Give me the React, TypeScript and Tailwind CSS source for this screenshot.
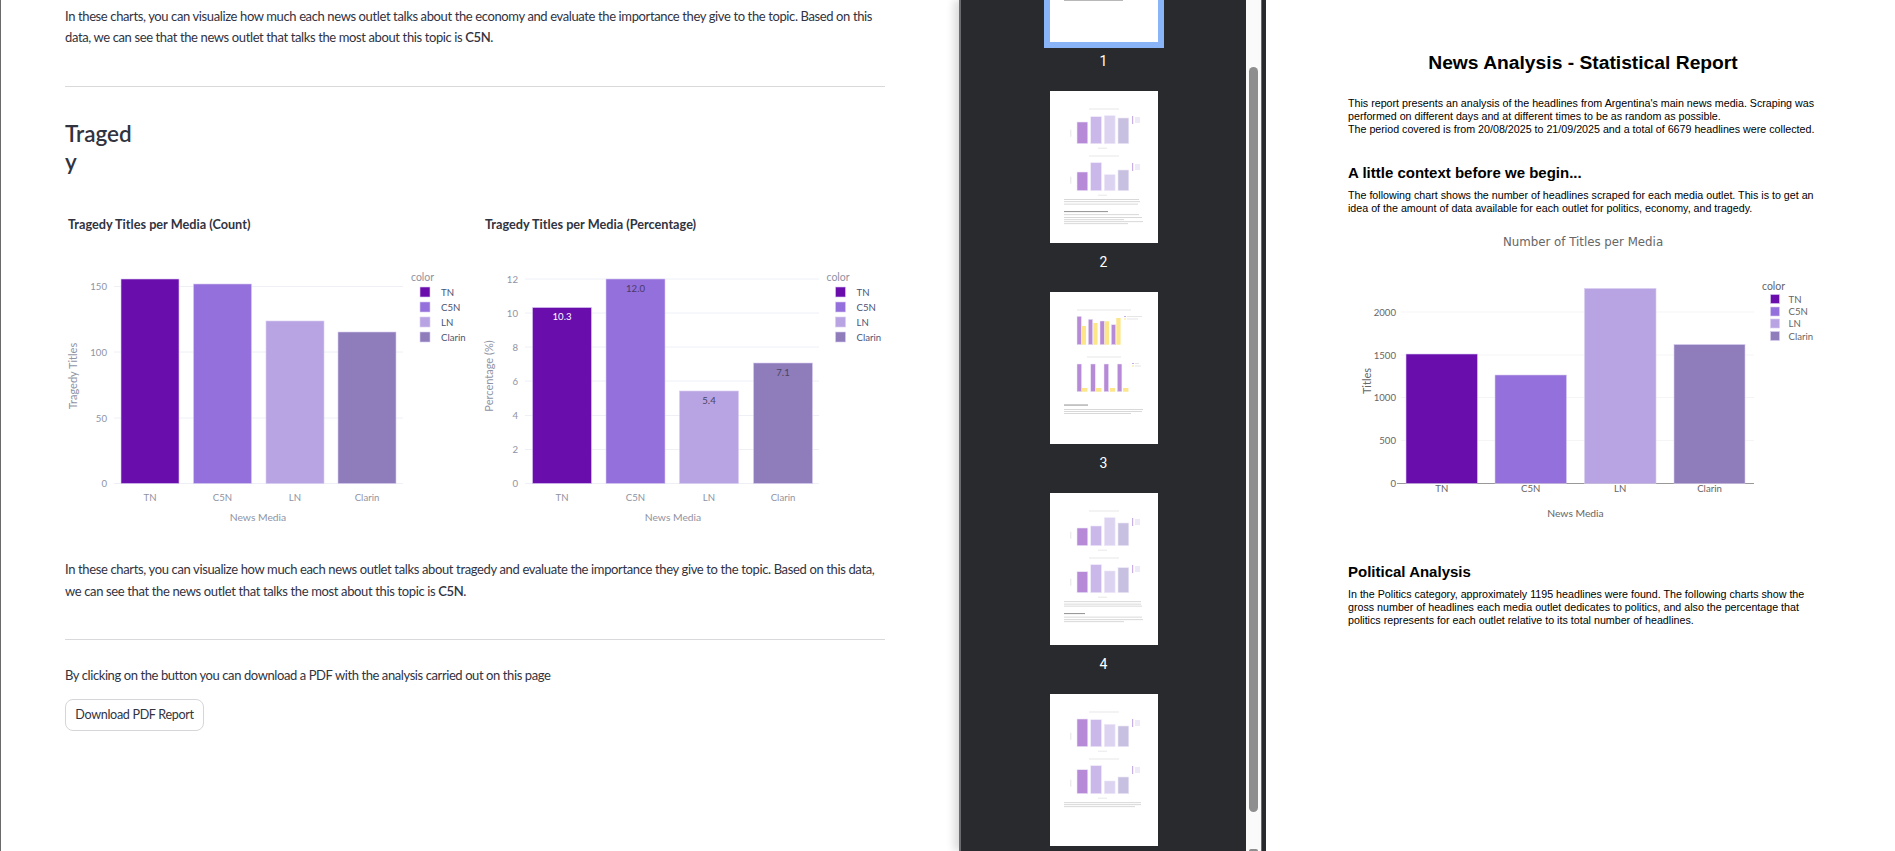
import React from "react";

const COLORS = ["#6a0dad", "#9370db", "#b8a4e3", "#8e7cbb"];
const NAMES = ["TN", "C5N", "LN", "Clarin"];
const THUMB_COLORS = ["#b68ad6", "#cbb8ea", "#dcd3f0", "#c7c0e0"];

interface ChartSpec {
  width: number;
  height: number;
  baseline: number;
  gridFrom: number;
  gridTo: number;
  tickRight: number;
  ticks: { y: number; label: string }[];
  bars: { x: number; w: number; top: number; label?: string; labelColor?: string }[];
  labelY: number;
  xTitle: { x: number; y: number };
  yTitle: { x: number; y: number; text: string };
  legend: { titleX: number; titleY: number; swatchX: number; labelX: number; ys: number[]; size: number };
  textColor: string;
  font: string;
  gridColor: string;
  title?: { x: number; y: number; text: string };
  axisLine?: boolean;
}

const BarChart: React.FC<{ spec: ChartSpec }> = ({ spec }) => {
  const s = spec;
  return (
    <svg width={s.width} height={s.height} className="block shrink-0" fontFamily={s.font} fill={s.textColor}>
      {s.title && (
        <text x={s.title.x} y={s.title.y} textAnchor="middle" fontSize="11.8" fontFamily="DejaVu Sans, sans-serif" fill="#666">
          {s.title.text}
        </text>
      )}
      {s.ticks.map((t) => (
        <g key={t.label}>
          <line x1={s.gridFrom} x2={s.gridTo} y1={t.y} y2={t.y} stroke={s.gridColor} strokeWidth="1" />
          <text x={s.tickRight} y={t.y + 3.5} textAnchor="end" fontSize="9.6">
            {t.label}
          </text>
        </g>
      ))}
      {s.axisLine && <line x1={s.gridFrom - 4} x2={s.gridTo} y1={s.baseline} y2={s.baseline} stroke="#999" strokeWidth="1" />}
      {s.bars.map((b, i) => (
        <g key={NAMES[i]}>
          <rect x={b.x} y={b.top} width={b.w} height={s.baseline - b.top} fill={COLORS[i]} stroke="#d9cdf2" strokeWidth="0.6" />
          {b.label && (
            <text x={b.x + b.w / 2} y={b.top + 12.5} textAnchor="middle" fontSize="9.6" fill={b.labelColor}>
              {b.label}
            </text>
          )}
          <text x={b.x + b.w / 2} y={s.labelY} textAnchor="middle" fontSize="9.6">
            {NAMES[i]}
          </text>
          <rect x={s.legend.swatchX} y={s.legend.ys[i] - s.legend.size / 2} width={s.legend.size} height={s.legend.size} fill={COLORS[i]} stroke="#d9cdf2" strokeWidth="0.6" />
          <text x={s.legend.labelX} y={s.legend.ys[i] + 3.5} fontSize="9.6" fill={s.axisLine ? s.textColor : "#4a5578"}>
            {NAMES[i]}
          </text>
        </g>
      ))}
      <text x={s.legend.titleX} y={s.legend.titleY + 3.5} fontSize="10.5">
        color
      </text>
      <text x={s.xTitle.x} y={s.xTitle.y + 3.5} textAnchor="middle" fontSize="10.3">
        News Media
      </text>
      <text transform={`translate(${s.yTitle.x + 3.5} ${s.yTitle.y}) rotate(-90)`} textAnchor="middle" fontSize="11">
        {s.yTitle.text}
      </text>
    </svg>
  );
};

const CHART_FONT = "Lato, sans-serif";

const countChart: ChartSpec = {
  width: 410,
  height: 275,
  baseline: 228.5,
  gridFrom: 49,
  gridTo: 338,
  tickRight: 42,
  ticks: [
    { y: 228.5, label: "0" },
    { y: 163, label: "50" },
    { y: 97, label: "100" },
    { y: 31.5, label: "150" },
  ],
  bars: [
    { x: 56, w: 58, top: 24 },
    { x: 128.5, w: 58, top: 29 },
    { x: 201, w: 58, top: 66 },
    { x: 273, w: 58, top: 77 },
  ],
  labelY: 246,
  xTitle: { x: 193, y: 262 },
  yTitle: { x: 8, y: 121, text: "Tragedy Titles" },
  legend: { titleX: 346, titleY: 22, swatchX: 355, labelX: 376, ys: [37, 52, 67, 82], size: 10 },
  textColor: "#8f93a3",
  font: CHART_FONT,
  gridColor: "#eef0f6",
};

const percentChart: ChartSpec = {
  ...countChart,
  gridFrom: 44,
  gridTo: 338,
  tickRight: 37,
  ticks: [
    { y: 228.5, label: "0" },
    { y: 194.5, label: "2" },
    { y: 160.5, label: "4" },
    { y: 126, label: "6" },
    { y: 92, label: "8" },
    { y: 58, label: "10" },
    { y: 24, label: "12" },
  ],
  bars: [
    { x: 51.5, w: 59, top: 52.5, label: "10.3", labelColor: "#ffffff" },
    { x: 125, w: 59, top: 24, label: "12.0", labelColor: "#4a3a6a" },
    { x: 198.5, w: 59, top: 136, label: "5.4", labelColor: "#4a4560" },
    { x: 272.5, w: 59, top: 108, label: "7.1", labelColor: "#4a4560" },
  ],
  xTitle: { x: 192, y: 262 },
  yTitle: { x: 8, y: 121, text: "Percentage (%)" },
  legend: { titleX: 345.5, titleY: 22, swatchX: 354.5, labelX: 375.5, ys: [37, 52, 67, 82], size: 10 },
};

const reportChart: ChartSpec = {
  width: 480,
  height: 295,
  baseline: 251.5,
  gridFrom: 61,
  gridTo: 414,
  tickRight: 56,
  ticks: [
    { y: 251.5, label: "0" },
    { y: 208.5, label: "500" },
    { y: 165.5, label: "1000" },
    { y: 123, label: "1500" },
    { y: 80, label: "2000" },
  ],
  bars: [
    { x: 66, w: 71.5, top: 122 },
    { x: 155, w: 71.5, top: 143 },
    { x: 244.5, w: 71.5, top: 56.5 },
    { x: 334, w: 71, top: 112.5 },
  ],
  labelY: 260,
  xTitle: { x: 235.5, y: 281.5 },
  yTitle: { x: 27.7, y: 149, text: "Titles" },
  legend: { titleX: 422, titleY: 54.5, swatchX: 430.5, labelX: 448.5, ys: [67, 79.5, 91.5, 104], size: 9 },
  textColor: "#666666",
  font: CHART_FONT,
  gridColor: "#f5f5f6",
  title: { x: 243, y: 14, text: "Number of Titles per Media" },
  axisLine: true,
};

interface ThumbBlock {
  titleY: number;
  baseline: number;
  tops: number[];
}

interface ThumbPage {
  page: number;
  blocks: ThumbBlock[];
  lines: { y: number; w: number; dark?: boolean }[];
}

const pages: ThumbPage[] = [
  { page: 1, blocks: [], lines: [{ y: 109.6, w: 59, dark: true }] },
  {
    page: 2,
    blocks: [
      { titleY: 18, baseline: 52.7, tops: [31, 25.7, 24.7, 27] },
      { titleY: 65, baseline: 99.7, tops: [81, 71.7, 83.7, 79] },
    ],
    lines: [
      { y: 108, w: 75 },
      { y: 110.3, w: 76 },
      { y: 112.7, w: 74 },
      { y: 120, w: 44, dark: true },
      { y: 123.3, w: 75 },
      { y: 126, w: 78 },
      { y: 128.3, w: 60 },
      { y: 130.3, w: 79 },
      { y: 132.3, w: 64 },
    ],
  },
  { page: 3, blocks: [], lines: [] },
  {
    page: 4,
    blocks: [
      { titleY: 18, baseline: 52.7, tops: [35, 33, 24.7, 30] },
      { titleY: 65, baseline: 99.7, tops: [78.7, 71.7, 78, 74.7] },
    ],
    lines: [
      { y: 108.3, w: 77 },
      { y: 110.7, w: 77 },
      { y: 112.7, w: 78 },
      { y: 120, w: 21, dark: true },
      { y: 123.7, w: 78 },
      { y: 126.3, w: 79 },
      { y: 128.3, w: 60 },
    ],
  },
  {
    page: 5,
    blocks: [
      { titleY: 18, baseline: 52.7, tops: [25, 25.7, 30.3, 32] },
      { titleY: 65, baseline: 99.7, tops: [75.7, 71.7, 87, 83] },
    ],
    lines: [
      { y: 108.3, w: 77 },
      { y: 110.3, w: 77 },
      { y: 112.3, w: 71 },
    ],
  },
];

const THUMB_X = [27, 40.7, 54.3, 68];

const ThumbLegend = ({ y }: { y: number }) => (
  <g>
    <rect x="82" y={y} width="1.2" height="8" fill="#c7aee6" />
    <rect x="85" y={y + 1} width="5" height="6" fill="#efeaf7" />
  </g>
);

const ThumbLines = ({ lines }: { lines: ThumbPage["lines"] }) => (
  <>
    {lines.map((l) => (
      <rect key={l.y} x="14" y={l.y} width={l.w} height={l.dark ? 1.1 : 0.8} fill={l.dark ? "#9a9a9a" : "#cfcfcf"} />
    ))}
  </>
);

const Thumb: React.FC<{ data: ThumbPage }> = ({ data }) => (
  <svg viewBox="0 0 108 152" width="108" height="152" className="block bg-white blur-[0.3px]">
    {data.blocks.map((b) => (
      <g key={b.titleY}>
        <rect x="39" y={b.titleY - 0.5} width="30" height="1" fill="#e8e8e8" />
        <ThumbLegend y={b.titleY + 7} />
        <rect x="20" y={b.baseline - 14} width="1.4" height="7" fill="#ececec" />
        {b.tops.map((top, i) => (
          <rect key={i} x={THUMB_X[i]} y={top} width="10.8" height={b.baseline - top} fill={THUMB_COLORS[i]} stroke="#eee8f8" strokeWidth="0.6" />
        ))}
        <rect x="48" y={b.baseline + 4} width="9" height="1" fill="#e8e8e8" />
      </g>
    ))}
    <ThumbLines lines={data.lines} />
    {data.page === 3 && (
      <g>
        <rect x="27" y="17.5" width="54" height="1" fill="#e8e8e8" />
        {[
          [27, 24.3, 31.7, 34],
          [38.3, 27.3, 43.3, 31],
          [50, 29, 54.7, 29.3],
          [61.3, 32.7, 66.3, 26],
        ].map(([px, pt, yx, yt]) => (
          <g key={px}>
            <rect x={px} y={pt} width="4.4" height={52.7 - pt} fill="#b68ad6" stroke="#eee8f8" strokeWidth="0.5" />
            <rect x={yx} y={yt} width="4.3" height={52.7 - yt} fill="#fde68a" />
          </g>
        ))}
        <rect x="74" y="24" width="2" height="1" fill="#c7aee6" />
        <rect x="77" y="24" width="15" height="1" fill="#e6e6e6" />
        <rect x="74" y="26.5" width="2" height="1" fill="#fde68a" />
        <rect x="77" y="26.5" width="11" height="1" fill="#e6e6e6" />
        <rect x="37" y="64.5" width="34" height="1" fill="#e8e8e8" />
        {[
          [27, 32],
          [40.7, 46],
          [54, 59.7],
          [67.3, 73],
        ].map(([px, yx]) => (
          <g key={px}>
            <rect x={px} y="72" width="4.6" height="27.7" fill="#b68ad6" stroke="#eee8f8" strokeWidth="0.5" />
            <rect x={yx} y="96" width="5.4" height="3.7" fill="#fde68a" />
          </g>
        ))}
        <rect x="82" y="71" width="2" height="1" fill="#c7aee6" />
        <rect x="85" y="71" width="4" height="1" fill="#e6e6e6" />
        <rect x="82" y="73.5" width="2" height="1" fill="#fde68a" />
        <rect x="85" y="73.5" width="6" height="1" fill="#e6e6e6" />
        <rect x="14" y="112.5" width="24" height="1.1" fill="#9a9a9a" />
        <rect x="14" y="117" width="79" height="0.8" fill="#cfcfcf" />
        <rect x="14" y="119" width="78" height="0.8" fill="#cfcfcf" />
        <rect x="14" y="121" width="67" height="0.8" fill="#cfcfcf" />
      </g>
    )}
  </svg>
);

const App: React.FC = () => {
  return (
    <div className="flex h-[851px] w-full overflow-hidden bg-white">
      {/* streamlit page */}
      <div className="w-[959px] shrink-0 border-l border-[#6a6a6a] pl-[64px] font-['Lato',sans-serif] text-[#31333f]">
        <div className="w-[820px]">
          <p className="whitespace-nowrap pt-[6px] text-[13px] leading-[21px] tracking-[-0.38px]">
            In these charts, you can visualize how much each news outlet talks about the economy and evaluate the importance they give to the topic. Based on this
            <br />
            data, we can see that the news outlet that talks the most about this topic is <b className="font-semibold">C5N</b>.
          </p>
          <hr className="mt-[38px] border-t border-[#d9d9dc]" />
          <h2 className="mt-[33px] w-[70px] break-words text-[22.5px] font-semibold leading-[28px]">Tragedy</h2>
          <div className="mt-[38px] flex gap-[6px]">
            <div className="w-[410px] shrink-0">
              <div className="pl-[3px] text-[12.7px] font-bold leading-5">Tragedy Titles per Media (Count)</div>
              <div className="mt-[21px]">
                <BarChart spec={countChart} />
              </div>
            </div>
            <div className="w-[410px] shrink-0">
              <div className="pl-[4px] text-[12.7px] font-bold leading-5">Tragedy Titles per Media (Percentage)</div>
              <div className="mt-[21px]">
                <BarChart spec={percentChart} />
              </div>
            </div>
          </div>
          <p className="mt-[29px] whitespace-nowrap text-[13px] leading-[21.5px] tracking-[-0.36px]">
            In these charts, you can visualize how much each news outlet talks about tragedy and evaluate the importance they give to the topic. Based on this data,
            <br />
            we can see that the news outlet that talks the most about this topic is <b className="font-semibold">C5N</b>.
          </p>
          <hr className="mt-[37px] border-t border-[#d9d9dc]" />
          <p className="mt-[25px] text-[13px] leading-[21px] tracking-[-0.41px]">By clicking on the button you can download a PDF with the analysis carried out on this page</p>
          <button className="mt-[13px] block h-[32px] w-[139px] rounded-lg border border-[#d5d6da] bg-white text-[12.6px] tracking-[-0.34px] text-[#31333f]">Download PDF Report</button>
        </div>
      </div>

      {/* pdf viewer: thumbnails */}
      <div className="relative flex w-[303px] shrink-0 border-l-2 border-[#6a6b6e] bg-[#292a2d] shadow-[-5px_0_8px_rgba(0,0,0,0.14)]">
        <div className="w-[285px] shrink-0 overflow-hidden">
          <div className="mx-auto mt-[-110px] w-[108px]">
            {pages.map((p) => (
              <div key={p.page}>
                <div className={p.page === 1 ? "outline-6 outline-[#8ab4f8]" : ""}>
                  <Thumb data={p} />
                </div>
                {p.page < 5 && <div className="mt-[9px] mb-[20px] h-5 text-center text-[14px] leading-5 text-white font-['Roboto',sans-serif]">{p.page}</div>}
              </div>
            ))}
          </div>
        </div>
        <div className="w-[15px] shrink-0 bg-[#fafafa]">
          <div className="mx-auto mt-[67px] h-[745px] w-[9px] rounded-full bg-[#8e8e8e]" />
          <div className="mx-auto mt-[37px] h-[2px] w-[9px] rounded-t bg-[#8e8e8e]" />
        </div>
        <div className="w-px shrink-0 bg-[#6a6b6e]" />
      </div>

      {/* pdf viewer: page */}
      <div className="flex-1 border-l-4 border-[#292a2d] bg-white pl-[82px] font-['Liberation_Sans',sans-serif] text-black">
        <div className="w-[470px]">
          <h1 className="pt-[51px] text-center text-[19.25px] font-bold leading-[24px]">News Analysis - Statistical Report</h1>
          <p className="mt-[22px] whitespace-nowrap text-[10.7px] leading-[13px]">
            This report presents an analysis of the headlines from Argentina's main news media. Scraping was
            <br />
            performed on different days and at different times to be as random as possible.
            <br />
            The period covered is from 20/08/2025 to 21/09/2025 and a total of 6679 headlines were collected.
          </p>
          <h2 className="mt-[27px] text-[15px] font-bold leading-5">A little context before we begin...</h2>
          <p className="mt-[6px] whitespace-nowrap text-[10.7px] leading-[13px]">
            The following chart shows the number of headlines scraped for each media outlet. This is to get an
            <br />
            idea of the amount of data available for each outlet for politics, economy, and tragedy.
          </p>
          <div className="mt-[17px] ml-[-8px]">
            <BarChart spec={reportChart} />
          </div>
          <h2 className="mt-[35px] text-[15px] font-bold leading-5">Political Analysis</h2>
          <p className="mt-[6px] whitespace-nowrap text-[10.7px] leading-[13px]">
            In the Politics category, approximately 1195 headlines were found. The following charts show the
            <br />
            gross number of headlines each media outlet dedicates to politics, and also the percentage that
            <br />
            politics represents for each outlet relative to its total number of headlines.
          </p>
        </div>
      </div>
    </div>
  );
};

export default App;
